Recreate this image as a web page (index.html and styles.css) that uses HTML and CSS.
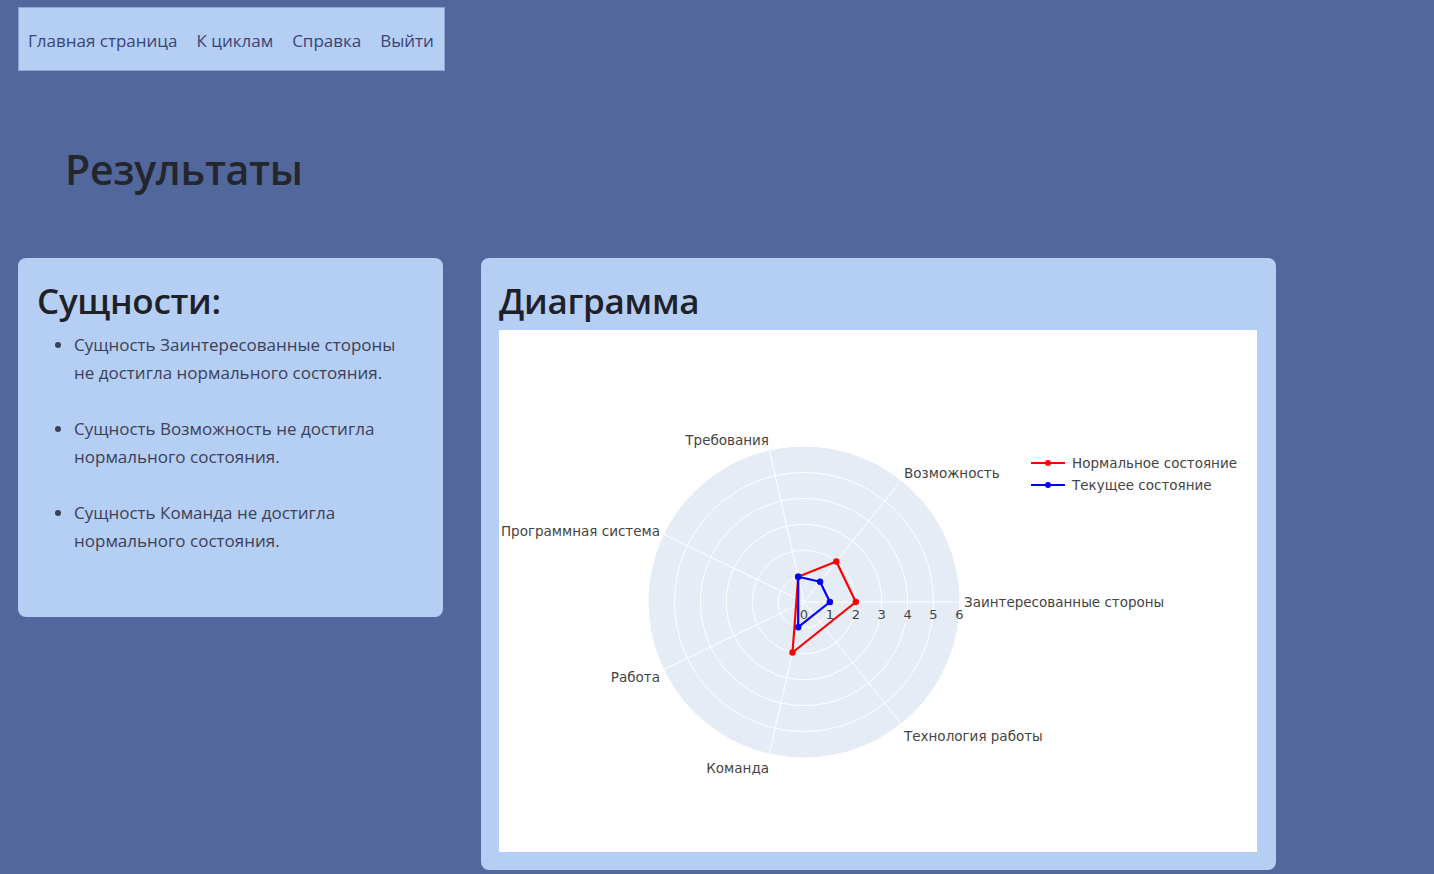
FILE: index.html
```html
<!DOCTYPE html>
<html lang="ru">
<head>
<meta charset="utf-8">
<title>Результаты</title>
<link rel="stylesheet" href="styles.css">
</head>
<body>
<nav class="topnav">
  <a href="#" class="navlink">Главная страница</a>
  <a href="#" class="navlink">К циклам</a>
  <a href="#" class="navlink">Справка</a>
  <a href="#" class="navlink">Выйти</a>
</nav>
<h1 class="page-title">Результаты</h1>
<main class="content">
  <section class="card card-entities">
    <h2 class="card-title">Сущности:</h2>
    <ul class="entity-list">
      <li>Сущность Заинтересованные стороны не достигла нормального состояния.</li>
      <li>Сущность Возможность не достигла нормального состояния.</li>
      <li>Сущность Команда не достигла нормального состояния.</li>
    </ul>
  </section>
  <section class="card card-chart">
    <h2 class="card-title">Диаграмма</h2>
    <div class="chart">
      <svg class="chart-svg" width="758" height="522" viewBox="0 0 758 522" xmlns="http://www.w3.org/2000/svg">
        <circle cx="305" cy="272" r="155.5" fill="#e5ecf6"/>
        <g fill="none" stroke="#ffffff" stroke-width="1">
          <circle cx="305" cy="272" r="25.9"/>
          <circle cx="305" cy="272" r="51.8"/>
          <circle cx="305" cy="272" r="77.7"/>
          <circle cx="305" cy="272" r="103.6"/>
          <circle cx="305" cy="272" r="129.5"/>
          <line x1="305" y1="272" x2="460.5" y2="272"/>
          <line x1="305" y1="272" x2="402" y2="150.4"/>
          <line x1="305" y1="272" x2="270.4" y2="120.4"/>
          <line x1="305" y1="272" x2="164.9" y2="204.5"/>
          <line x1="305" y1="272" x2="164.9" y2="339.5"/>
          <line x1="305" y1="272" x2="270.4" y2="423.6"/>
          <line x1="305" y1="272" x2="402" y2="393.6"/>
        </g>
        <g class="tick" text-anchor="middle">
          <text x="305" y="289">0</text>
          <text x="330.9" y="289">1</text>
          <text x="356.8" y="289">2</text>
          <text x="382.7" y="289">3</text>
          <text x="408.6" y="289">4</text>
          <text x="434.5" y="289">5</text>
          <text x="460.4" y="289">6</text>
        </g>
        <g class="axis-label">
          <text x="465" y="277">Заинтересованные стороны</text>
          <text x="405" y="148">Возможность</text>
          <text x="270" y="115" text-anchor="end">Требования</text>
          <text x="161" y="206" text-anchor="end">Программная система</text>
          <text x="161" y="352" text-anchor="end">Работа</text>
          <text x="270" y="443" text-anchor="end">Команда</text>
          <text x="405" y="411">Технология работы</text>
        </g>
        <polygon points="356.8,272 337.3,231.5 299.2,246.8 293.5,322.5" fill="none" stroke="#ff0000" stroke-width="2.2" stroke-linejoin="round"/>
        <g fill="#ff0000">
          <circle cx="356.8" cy="272" r="3.2"/>
          <circle cx="337.3" cy="231.5" r="3.2"/>
          <circle cx="299.2" cy="246.8" r="3.2"/>
          <circle cx="293.5" cy="322.5" r="3.2"/>
        </g>
        <polygon points="330.9,272 321.1,251.8 299.2,246.8 299.2,297.2" fill="none" stroke="#0000ff" stroke-width="2.2" stroke-linejoin="round"/>
        <g fill="#0000ff">
          <circle cx="330.9" cy="272" r="3.2"/>
          <circle cx="321.1" cy="251.8" r="3.2"/>
          <circle cx="299.2" cy="246.8" r="3.2"/>
          <circle cx="299.2" cy="297.2" r="3.2"/>
        </g>
        <g class="legend">
          <line x1="532" y1="133" x2="566" y2="133" stroke="#ff0000" stroke-width="2"/>
          <circle cx="549" cy="133" r="3" fill="#ff0000"/>
          <text x="573" y="138">Нормальное состояние</text>
          <line x1="532" y1="155" x2="566" y2="155" stroke="#0000ff" stroke-width="2"/>
          <circle cx="549" cy="155" r="3" fill="#0000ff"/>
          <text x="573" y="160">Текущее состояние</text>
        </g>
      </svg>
    </div>
  </section>
</main>
</body>
</html>
```
FILE: styles.css
```css
* { box-sizing: border-box; }

html, body {
  margin: 0;
  padding: 0;
}

body {
  background: #52679b;
  font-family: "Open Sans", "Noto Sans", sans-serif;
  color: #26282f;
  width: 1434px;
  height: 874px;
  overflow: hidden;
  padding: 7px 0 0 18px;
}

.topnav {
  display: flex;
  align-items: center;
  gap: 19px;
  width: 427px;
  height: 64px;
  padding: 2px 9px 0 9px;
  background: #b5cef4;
  border: 1px solid #8ea5d2;
}

.navlink {
  color: #3a4577;
  text-decoration: none;
  font-size: 17px;
  white-space: nowrap;
}

.page-title {
  margin: 66px 0 0 47px;
  font-size: 41px;
  font-weight: 600;
  line-height: 64px;
  color: #24262d;
  letter-spacing: -0.3px;
}

.content {
  display: flex;
  align-items: flex-start;
  gap: 38px;
  margin-top: 57px;
}

.card {
  background: #b5cef4;
  border-radius: 8px;
}

.card-title {
  margin: 0;
  font-size: 35px;
  font-weight: 600;
  line-height: 46px;
  color: #1f2128;
  letter-spacing: -0.3px;
}

.card-entities {
  width: 425px;
  height: 359px;
  padding: 20px 19px;
}

.entity-list {
  margin: 7px 0 0 0;
  padding: 0 16px 0 37px;
  font-size: 17px;
  line-height: 28px;
  color: #3c4157;
}

.entity-list li {
  margin-bottom: 28px;
}

.card-chart {
  width: 795px;
  height: 612px;
  padding: 20px 19px 18px 18px;
}

.chart {
  margin-top: 6px;
  width: 758px;
  height: 522px;
  background: #ffffff;
}

.chart-svg {
  display: block;
  font-family: "DejaVu Sans", Verdana, sans-serif;
}

.tick text {
  font-size: 13px;
  fill: #444444;
}

.axis-label text {
  font-size: 13.5px;
  fill: #444444;
}

.legend text {
  font-size: 13.5px;
  fill: #444444;
}
```
